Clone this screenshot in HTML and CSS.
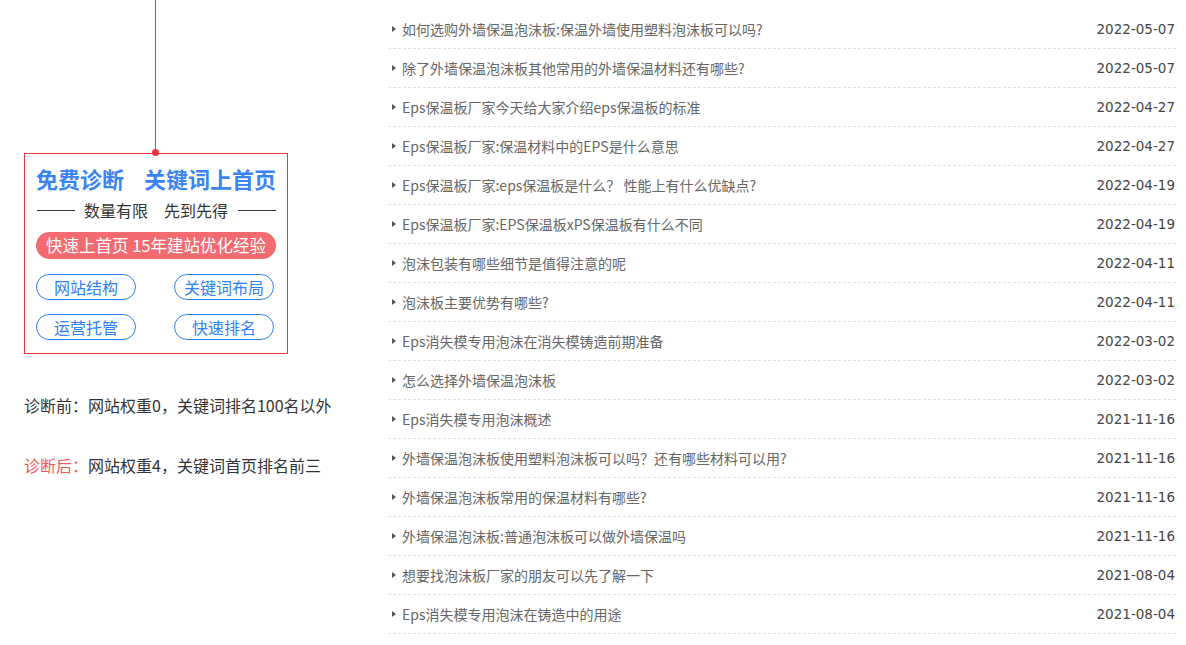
FILE: index.html
```html
<!DOCTYPE html>
<html lang="zh-CN">
<head>
  <meta charset="UTF-8" />
  <title>新闻列表</title>
  <link rel="stylesheet" href="styles.css">
</head>
<body>
  <div class="page">
    <div class="side">
      <div class="stem"></div>
      <div class="promo">
        <div class="promo-title"><span>免费诊断</span><span>关键词上首页</span></div>
        <div class="promo-sub"><i></i><span>数量有限　先到先得</span><i></i></div>
        <div class="promo-pill">快速上首页 15年建站优化经验</div>
        <div class="promo-tags">
          <a href="#">网站结构</a>
          <a href="#">关键词布局</a>
          <a href="#">运营托管</a>
          <a href="#">快速排名</a>
        </div>
      </div>
      <p class="note">诊断前：网站权重0，关键词排名100名以外</p>
      <p class="note"><em>诊断后：</em>网站权重4，关键词首页排名前三</p>
    </div>

    <ul class="news">
      <li><a href="#">如何选购外墙保温泡沫板:保温外墙使用塑料泡沫板可以吗?</a><span>2022-05-07</span></li>
      <li><a href="#">除了外墙保温泡沫板其他常用的外墙保温材料还有哪些?</a><span>2022-05-07</span></li>
      <li><a href="#">Eps保温板厂家今天给大家介绍eps保温板的标准</a><span>2022-04-27</span></li>
      <li><a href="#">Eps保温板厂家:保温材料中的EPS是什么意思</a><span>2022-04-27</span></li>
      <li><a href="#">Eps保温板厂家:eps保温板是什么？ 性能上有什么优缺点?</a><span>2022-04-19</span></li>
      <li><a href="#">Eps保温板厂家:EPS保温板xPS保温板有什么不同</a><span>2022-04-19</span></li>
      <li><a href="#">泡沫包装有哪些细节是值得注意的呢</a><span>2022-04-11</span></li>
      <li><a href="#">泡沫板主要优势有哪些?</a><span>2022-04-11</span></li>
      <li><a href="#">Eps消失模专用泡沫在消失模铸造前期准备</a><span>2022-03-02</span></li>
      <li><a href="#">怎么选择外墙保温泡沫板</a><span>2022-03-02</span></li>
      <li><a href="#">Eps消失模专用泡沫概述</a><span>2021-11-16</span></li>
      <li><a href="#">外墙保温泡沫板使用塑料泡沫板可以吗？还有哪些材料可以用?</a><span>2021-11-16</span></li>
      <li><a href="#">外墙保温泡沫板常用的保温材料有哪些?</a><span>2021-11-16</span></li>
      <li><a href="#">外墙保温泡沫板:普通泡沫板可以做外墙保温吗</a><span>2021-11-16</span></li>
      <li><a href="#">想要找泡沫板厂家的朋友可以先了解一下</a><span>2021-08-04</span></li>
      <li><a href="#">Eps消失模专用泡沫在铸造中的用途</a><span>2021-08-04</span></li>
    </ul>
  </div>
</body>
</html>
```

FILE: styles.css
```css
body {
  margin: 0;
  font-family: "Noto Sans CJK SC", "Noto Sans", sans-serif;
  background: #fff;
  color: #333;
}

a {
  text-decoration: none;
}

.page {
  display: flex;
  width: 1186px;
}

.side {
  flex: none;
  width: 388px;
  padding-left: 24px;
  box-sizing: border-box;
}

.stem {
  position: relative;
  width: 1px;
  height: 153px;
  margin-left: 131px;
  background: #e8383d;
}

.stem::after {
  content: "";
  position: absolute;
  left: -3px;
  bottom: -3px;
  width: 7px;
  height: 7px;
  border-radius: 50%;
  background: #e8383d;
}

.promo {
  width: 264px;
  box-sizing: border-box;
  border: 1px solid #e8383d;
  padding: 8px 11px 13px;
}

.promo-title {
  display: flex;
  justify-content: center;
  gap: 20px;
  font-size: 22px;
  font-weight: bold;
  line-height: 32px;
  color: #3a84f2;
  white-space: nowrap;
}

.promo-sub {
  display: flex;
  align-items: center;
  margin-top: 4px;
  height: 24px;
  font-size: 16px;
  color: #333;
}

.promo-sub i {
  width: 38px;
  height: 1px;
  background: #333;
  margin-left: 1px;
}

.promo-sub span {
  flex: 1;
  text-align: center;
}

.promo-pill {
  margin-top: 10px;
  height: 27px;
  line-height: 27px;
  border-radius: 14px;
  background: #f36b70;
  color: #fff;
  font-size: 16.5px;
  text-align: center;
  white-space: nowrap;
}

.promo-tags {
  display: grid;
  grid-template-columns: 100px 100px;
  column-gap: 38px;
  row-gap: 14px;
  margin-top: 15px;
}

.promo-tags a {
  height: 26px;
  line-height: 24px;
  box-sizing: border-box;
  border: 1px solid #2f7ff5;
  border-radius: 13px;
  color: #2f7ff5;
  font-size: 16px;
  text-align: center;
}

.note {
  margin: 39px 0 0;
  line-height: 24px;
  font-size: 16px;
  color: #333;
}

.note + .note {
  margin-top: 36px;
}

.note em {
  font-style: normal;
  color: #f25a5a;
}

.news {
  flex: none;
  list-style: none;
  margin: 10px 0 0;
  padding: 0;
  width: 788px;
}

.news li {
  display: flex;
  align-items: center;
  justify-content: space-between;
  height: 38px;
  border-bottom: 1px dashed #e2e2e2;
  padding: 0 1px 0 4px;
  font-size: 14px;
}

.news li a {
  display: flex;
  align-items: center;
  color: #666;
}

.news li a::before {
  content: "";
  width: 0;
  height: 0;
  border-top: 3.5px solid transparent;
  border-bottom: 3.5px solid transparent;
  border-left: 4px solid #555;
  margin-right: 6px;
}

.news li span {
  font-family: "DejaVu Sans", Verdana, sans-serif;
  font-size: 13.5px;
  color: #444;
}
```
